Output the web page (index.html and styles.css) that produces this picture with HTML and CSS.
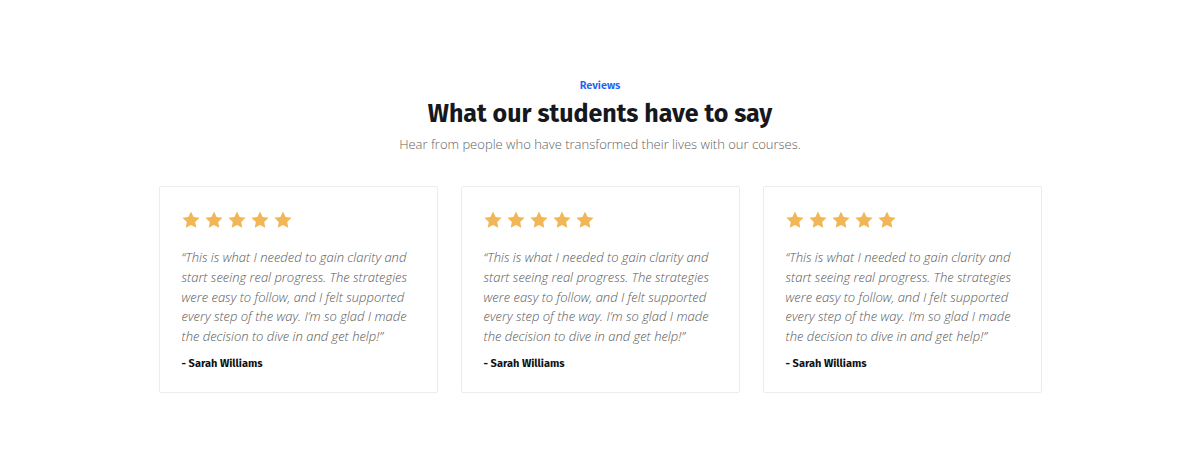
FILE: index.html
```html
<!DOCTYPE html>
<html lang="en">
<head>
<meta charset="utf-8">
<link rel="stylesheet" href="styles.css">
</head>
<body>
<section class="reviews">
  <div class="eyebrow">Reviews</div>
  <h2 class="title">What our students have to say</h2>
  <p class="subtitle">Hear from people who have transformed their lives with our courses.</p>
  <div class="cards">
    <div class="card">
      <div class="stars">
        <svg viewBox="0 0 24 24"><path d="M12 1.8l3.1 6.6 7.2.9-5.3 5 1.4 7.1L12 17.9l-6.4 3.5L7 14.3l-5.3-5 7.2-.9z"/></svg>
        <svg viewBox="0 0 24 24"><path d="M12 1.8l3.1 6.6 7.2.9-5.3 5 1.4 7.1L12 17.9l-6.4 3.5L7 14.3l-5.3-5 7.2-.9z"/></svg>
        <svg viewBox="0 0 24 24"><path d="M12 1.8l3.1 6.6 7.2.9-5.3 5 1.4 7.1L12 17.9l-6.4 3.5L7 14.3l-5.3-5 7.2-.9z"/></svg>
        <svg viewBox="0 0 24 24"><path d="M12 1.8l3.1 6.6 7.2.9-5.3 5 1.4 7.1L12 17.9l-6.4 3.5L7 14.3l-5.3-5 7.2-.9z"/></svg>
        <svg viewBox="0 0 24 24"><path d="M12 1.8l3.1 6.6 7.2.9-5.3 5 1.4 7.1L12 17.9l-6.4 3.5L7 14.3l-5.3-5 7.2-.9z"/></svg>
      </div>
      <p class="quote">“This is what I needed to gain clarity and start seeing real progress. The strategies were easy to follow, and I felt supported every step of the way. I’m so glad I made the decision to dive in and get help!”</p>
      <div class="author">- Sarah Williams</div>
    </div>
    <div class="card">
      <div class="stars">
        <svg viewBox="0 0 24 24"><path d="M12 1.8l3.1 6.6 7.2.9-5.3 5 1.4 7.1L12 17.9l-6.4 3.5L7 14.3l-5.3-5 7.2-.9z"/></svg>
        <svg viewBox="0 0 24 24"><path d="M12 1.8l3.1 6.6 7.2.9-5.3 5 1.4 7.1L12 17.9l-6.4 3.5L7 14.3l-5.3-5 7.2-.9z"/></svg>
        <svg viewBox="0 0 24 24"><path d="M12 1.8l3.1 6.6 7.2.9-5.3 5 1.4 7.1L12 17.9l-6.4 3.5L7 14.3l-5.3-5 7.2-.9z"/></svg>
        <svg viewBox="0 0 24 24"><path d="M12 1.8l3.1 6.6 7.2.9-5.3 5 1.4 7.1L12 17.9l-6.4 3.5L7 14.3l-5.3-5 7.2-.9z"/></svg>
        <svg viewBox="0 0 24 24"><path d="M12 1.8l3.1 6.6 7.2.9-5.3 5 1.4 7.1L12 17.9l-6.4 3.5L7 14.3l-5.3-5 7.2-.9z"/></svg>
      </div>
      <p class="quote">“This is what I needed to gain clarity and start seeing real progress. The strategies were easy to follow, and I felt supported every step of the way. I’m so glad I made the decision to dive in and get help!”</p>
      <div class="author">- Sarah Williams</div>
    </div>
    <div class="card">
      <div class="stars">
        <svg viewBox="0 0 24 24"><path d="M12 1.8l3.1 6.6 7.2.9-5.3 5 1.4 7.1L12 17.9l-6.4 3.5L7 14.3l-5.3-5 7.2-.9z"/></svg>
        <svg viewBox="0 0 24 24"><path d="M12 1.8l3.1 6.6 7.2.9-5.3 5 1.4 7.1L12 17.9l-6.4 3.5L7 14.3l-5.3-5 7.2-.9z"/></svg>
        <svg viewBox="0 0 24 24"><path d="M12 1.8l3.1 6.6 7.2.9-5.3 5 1.4 7.1L12 17.9l-6.4 3.5L7 14.3l-5.3-5 7.2-.9z"/></svg>
        <svg viewBox="0 0 24 24"><path d="M12 1.8l3.1 6.6 7.2.9-5.3 5 1.4 7.1L12 17.9l-6.4 3.5L7 14.3l-5.3-5 7.2-.9z"/></svg>
        <svg viewBox="0 0 24 24"><path d="M12 1.8l3.1 6.6 7.2.9-5.3 5 1.4 7.1L12 17.9l-6.4 3.5L7 14.3l-5.3-5 7.2-.9z"/></svg>
      </div>
      <p class="quote">“This is what I needed to gain clarity and start seeing real progress. The strategies were easy to follow, and I felt supported every step of the way. I’m so glad I made the decision to dive in and get help!”</p>
      <div class="author">- Sarah Williams</div>
    </div>
  </div>
</section>
</body>
</html>
```
FILE: styles.css
```css
html, body {
  margin: 0;
  padding: 0;
  background: #ffffff;
}
body {
  font-family: "Open Sans", "Noto Sans", sans-serif;
}
.reviews {
  padding-top: 78px;
  display: flex;
  flex-direction: column;
  align-items: center;
}
.eyebrow {
  font-family: "Fira Sans", "Noto Sans", sans-serif;
  font-weight: 600;
  font-size: 11px;
  line-height: 16px;
  color: #1d63f0;
}
.title {
  margin: 4px 0 0;
  font-family: "Fira Sans", "Noto Sans", sans-serif;
  font-weight: 700;
  font-size: 25px;
  line-height: 32px;
  color: #16181d;
}
.subtitle {
  margin: 4px 0 0;
  font-weight: 300;
  font-size: 13px;
  line-height: 20px;
  color: #5f5f5f;
}
.cards {
  margin-top: 32px;
  display: flex;
  gap: 23px;
}
.card {
  box-sizing: border-box;
  width: 279px;
  height: 207px;
  border: 1px solid #ececec;
  border-radius: 2px;
  padding: 23px 22px 0 22px;
}
.stars {
  display: flex;
  gap: 3px;
  margin-left: -1px;
}
.stars svg {
  width: 20px;
  height: 20px;
  fill: #f2b654;
}
.quote {
  margin: 18px 0 0;
  font-style: italic;
  font-weight: 300;
  font-size: 13px;
  line-height: 19.75px;
  color: #585858;
}
.author {
  margin-top: 9px;
  font-family: "Fira Sans", "Noto Sans", sans-serif;
  font-weight: 700;
  font-size: 11px;
  line-height: 16px;
  color: #111;
}
```
